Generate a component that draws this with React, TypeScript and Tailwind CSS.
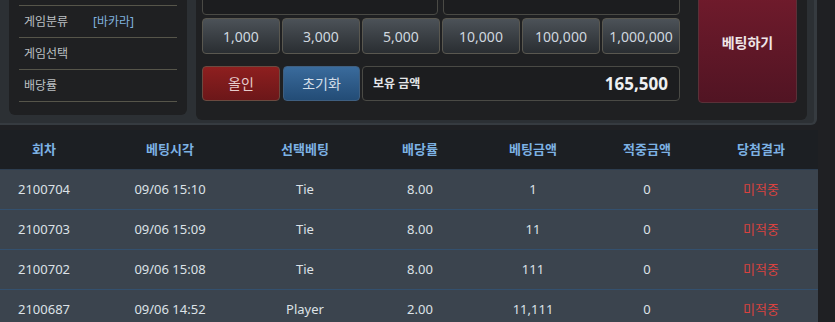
import React from "react";

const font = { fontFamily: '"Noto Sans", "Noto Sans CJK KR", sans-serif' };

const chips = ["1,000", "3,000", "5,000", "10,000", "100,000", "1,000,000"];

const rows = [
  ["2100704", "09/06 15:10", "Tie", "8.00", "1", "0", "미적중"],
  ["2100703", "09/06 15:09", "Tie", "8.00", "11", "0", "미적중"],
  ["2100702", "09/06 15:08", "Tie", "8.00", "111", "0", "미적중"],
  ["2100687", "09/06 14:52", "Player", "2.00", "11,111", "0", "미적중"],
];

const headers = ["회차", "베팅시각", "선택베팅", "배당률", "베팅금액", "적중금액", "당첨결과"];

const gridCols = "grid grid-cols-[88px_164px_106px_124px_102px_126px_102px]";

export default function App() {
  return (
    <div className="w-[835px] h-[322px] bg-[#1f2023] overflow-hidden" style={font}>
      {/* top panel */}
      <div className="w-[817px] h-[125px] bg-[#2c3034] rounded-br-[6px] flex pl-[9px] border-r-[3px] border-b-[2px] border-[#363b40]">
        {/* left info panel */}
        <div className="w-[178px] h-[115px] bg-[#1f2022] rounded-b-[6px] px-[10px]">
          <div className="h-[6px] border-b border-[#56554a]" />
          <div className="h-[32px] border-b border-[#56554a] flex items-center pl-[5px] text-[12px] text-[#bcc0c4]">
            <span className="w-[69px]">게임분류</span>
            <span className="text-[#7fb2df]">[바카라]</span>
          </div>
          <div className="h-[32px] border-b border-[#56554a] flex items-center pl-[5px] text-[12px] text-[#bcc0c4]">
            게임선택
          </div>
          <div className="h-[32px] border-b border-[#56554a] flex items-center pl-[5px] text-[12px] text-[#bcc0c4]">
            배당률
          </div>
        </div>
        {/* middle panel */}
        <div className="ml-[9px] w-[611px] h-[120px] bg-[#1f2022] rounded-b-[6px] flex pl-[6px]">
          <div className="w-[478px] flex flex-col">
            <div className="flex gap-[5px] mt-[-10px] h-[25px]">
              <div className="w-[236px] h-full border border-[#4a4a45] rounded-[4px] bg-[#1c1d1f]" />
              <div className="w-[237px] h-full border border-[#4a4a45] rounded-[4px] bg-[#1c1d1f]" />
            </div>
            <div className="flex gap-[2px] mt-[3px] h-[36px]">
              {chips.map((c) => (
                <div
                  key={c}
                  className="w-[78px] h-full rounded-[4px] border border-[#5a5850] bg-gradient-to-b from-[#4c5258] to-[#2a2e32] flex items-center justify-center text-[14px] text-[#cfd7df]"
                >
                  {c}
                </div>
              ))}
            </div>
            <div className="flex mt-[12px] h-[35px]">
              <div className="w-[78px] h-full rounded-[4px] border border-[#6b4a40] bg-gradient-to-b from-[#8e1f1f] to-[#6c1719] flex items-center justify-center text-[14px] text-[#e6cccc]">
                올인
              </div>
              <div className="ml-[3px] w-[77px] h-full rounded-[4px] border border-[#3f5f80] bg-gradient-to-b from-[#3a6b9c] to-[#234c76] flex items-center justify-center text-[14px] text-[#d3dee9]">
                초기화
              </div>
              <div className="ml-[2px] w-[318px] h-full rounded-[4px] border border-[#4a4a45] bg-[#1c1d1f] flex items-center justify-between pl-[10px] pr-[11px]">
                <span className="text-[12px] font-bold text-[#e4e6e8]">보유 금액</span>
                <span className="text-[17px] font-bold text-[#eef0f2]">165,500</span>
              </div>
            </div>
          </div>
          <div className="ml-[18px] mt-[-10px] w-[99px] h-[113px] rounded-[4px] border border-[#5a3038] bg-gradient-to-b from-[#711b2c] to-[#511423] flex items-center justify-center pb-[8px]">
            <span className="text-[14px] font-bold text-[#f0e6e8]">베팅하기</span>
          </div>
        </div>
      </div>

      {/* table */}
      <div className="mt-[5px] w-[818px]">
        <div className={`${gridCols} h-[40px] bg-[#1c1f23] border-b border-[#2e3e50] items-center`}>
          {headers.map((h) => (
            <div key={h} className="text-center text-[13px] font-bold text-[#7db2e4]">
              {h}
            </div>
          ))}
        </div>
        {rows.map((r, i) => (
          <div
            key={i}
            className={`${gridCols} h-[40px] bg-[#3b444e] border-b border-[#33506e] items-center`}
          >
            {r.map((cell, j) => (
              <div
                key={j}
                className={`text-center text-[13px] ${j === 6 ? "text-[#d9423f]" : "text-[#dde2e7]"}`}
              >
                {cell}
              </div>
            ))}
          </div>
        ))}
      </div>
    </div>
  );
}
